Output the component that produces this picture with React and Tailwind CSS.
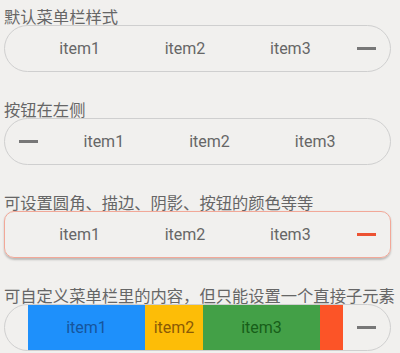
import React from "react";

const cjk = { fontFamily: '"Noto Sans CJK SC", "Noto Sans", sans-serif' };
const rob = { fontFamily: 'Roboto, "Noto Sans", sans-serif' };

function Minus({ red }) {
  return (
    <div className={`w-[19px] h-[3px] ${red ? "bg-[#ec5232]" : "bg-[#777777]"}`} />
  );
}

function Title({ children }) {
  return (
    <div className="pl-[4px] h-[17px] leading-[17px] text-[16.3px] text-[#666666] whitespace-nowrap" style={cjk}>
      {children}
    </div>
  );
}

function Items() {
  return (
    <div className="flex-1 grid grid-cols-3 h-full items-center text-[16px] text-[#666666]" style={rob}>
      <div className="text-center">item1</div>
      <div className="text-center">item2</div>
      <div className="text-center">item3</div>
    </div>
  );
}

export default function App() {
  return (
    <div className="w-[400px] h-[353px] bg-[#f1f0ee] pt-[8px] overflow-hidden">
      <div className="mb-[29px]">
        <Title>默认菜单栏样式</Title>
        <div className="ml-[4px] w-[387px] h-[47px] rounded-full border border-[#cfcfcf] flex items-center pl-[22px]">
          <Items />
          <div className="w-[47px] h-full flex items-center justify-center">
            <Minus />
          </div>
        </div>
      </div>

      <div className="mb-[29px]">
        <Title>按钮在左侧</Title>
        <div className="ml-[4px] w-[387px] h-[47px] rounded-full border border-[#cfcfcf] flex items-center pr-[22px]">
          <div className="w-[46px] h-full flex items-center justify-center">
            <Minus />
          </div>
          <Items />
        </div>
      </div>

      <div className="mb-[29px]">
        <Title>可设置圆角、描边、阴影、按钮的颜色等等</Title>
        <div className="ml-[4px] w-[387px] h-[47px] rounded-[10px] border border-[#f2a898] shadow-[0_1.5px_2px_rgba(0,0,0,0.22)] flex items-center pl-[22px]">
          <Items />
          <div className="w-[47px] h-full flex items-center justify-center">
            <Minus red />
          </div>
        </div>
      </div>

      <div>
        <Title>可自定义菜单栏里的内容，但只能设置一个直接子元素</Title>
        <div className="ml-[4px] w-[387px] h-[47px] rounded-full border border-[#cfcfcf] flex items-stretch pl-[23px]">
          <div className="flex-1 flex items-stretch text-[16px]" style={rob}>
            <div className="w-[117px] bg-[#1e90fb] text-[#16559c] flex items-center justify-center">item1</div>
            <div className="w-[58px] bg-[#fdbd07] text-[#8a5a06] flex items-center justify-center">item2</div>
            <div className="w-[117px] bg-[#43a047] text-[#175e19] flex items-center justify-center">item3</div>
            <div className="w-[23px] bg-[#fc5427]" />
          </div>
          <div className="w-[47px] flex items-center justify-center">
            <Minus />
          </div>
        </div>
      </div>
    </div>
  );
}
